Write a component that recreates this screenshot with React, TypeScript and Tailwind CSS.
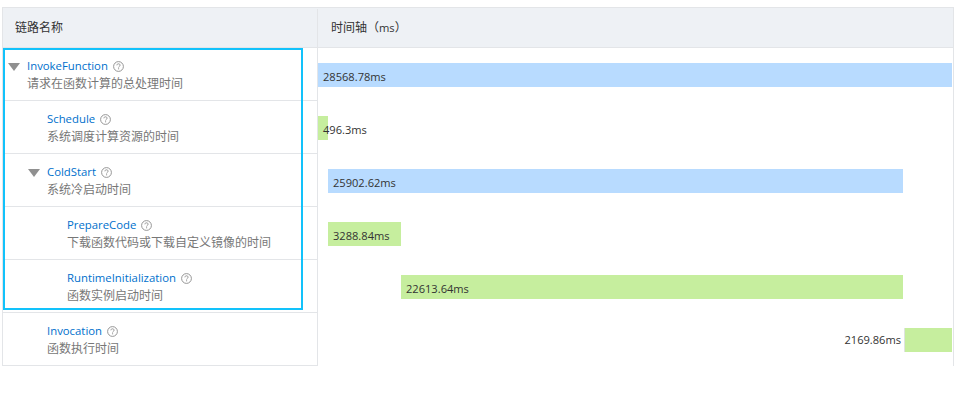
const FONT = "font-['Open_Sans','Noto_Sans_CJK_SC',sans-serif]";

type Row = {
  name: string;
  desc: string;
  indent: string;
  open?: boolean;
};

const rows: Row[] = [
  { name: "InvokeFunction", desc: "请求在函数计算的总处理时间", indent: "pl-[24px]", open: true },
  { name: "Schedule", desc: "系统调度计算资源的时间", indent: "pl-[44px]" },
  { name: "ColdStart", desc: "系统冷启动时间", indent: "pl-[44px]", open: true },
  { name: "PrepareCode", desc: "下载函数代码或下载自定义镜像的时间", indent: "pl-[64px]" },
  { name: "RuntimeInitialization", desc: "函数实例启动时间", indent: "pl-[64px]" },
  { name: "Invocation", desc: "函数执行时间", indent: "pl-[44px]" },
];

const HelpIcon = () => (
  <svg width="11" height="11" viewBox="0 0 11 11" fill="none" className="ml-[5px] shrink-0">
    <circle cx="5.5" cy="5.5" r="4.9" stroke="#8a8a8a" strokeWidth="0.9" />
    <path d="M3.9 4.3c0-.9.7-1.5 1.6-1.5s1.6.6 1.6 1.4c0 1.1-1.5 1.2-1.5 2.3" stroke="#8a8a8a" strokeWidth="0.9" />
    <rect x="5.1" y="7.3" width="1" height="1" fill="#8a8a8a" />
  </svg>
);

const Caret = ({ className }: { className: string }) => (
  <svg width="12" height="8" viewBox="0 0 12 8" className={className}>
    <path d="M0 0h12L6 8z" fill="#909090" />
  </svg>
);

const NameCell = ({ row }: { row: Row }) => (
  <div className={`relative h-[53px] border-b border-[#e3e5e8] pt-[9px] ${row.indent}`}>
    {row.open && (
      <Caret className={row.indent === "pl-[24px]" ? "absolute left-[5px] top-[15px]" : "absolute left-[25px] top-[15px]"} />
    )}
    <div className="flex h-[18px] items-center text-[11.35px] leading-[18px] text-[#0070cc]">
      <span>{row.name}</span>
      <HelpIcon />
    </div>
    <div className="text-[12px] leading-[18px] text-[#777777]">{row.desc}</div>
  </div>
);

const BarRow = ({ children }: { children: React.ReactNode }) => (
  <div className="flex h-[53px] items-start pt-[15px]">{children}</div>
);

const Label = ({ children }: { children: React.ReactNode }) => (
  <span className="whitespace-nowrap pl-[5px] text-[11.1px] leading-6 text-[#333333]">{children}</span>
);

export default function App() {
  return (
    <div className={`h-[416px] w-[959px] overflow-hidden bg-white ${FONT}`}>
      <div className="relative ml-[2px] mt-[7px] w-[952px] border-x border-[#e3e5e8]">
        <div className="flex h-[41px] border-y border-[#e3e5e8] bg-[#eef1f5] pt-px text-[12px] text-[#333333]">
          <div className="flex w-[315px] items-center border-r border-[#e3e5e8] pl-3">链路名称</div>
          <div className="flex items-center pl-[13px]">
            时间轴（<span className="text-[11.2px]">ms</span>）
          </div>
        </div>
        <div className="flex">
          <div className="w-[315px] border-r border-[#e3e5e8]">
            {rows.map((row) => (
              <NameCell key={row.name} row={row} />
            ))}
          </div>
          <div className="flex-1">
            <BarRow>
              <div className="h-6 w-[634px] bg-[#b8dbff]">
                <Label>28568.78ms</Label>
              </div>
            </BarRow>
            <BarRow>
              <div className="h-6 w-[10px] bg-[#c6ee9e]">
                <Label>496.3ms</Label>
              </div>
            </BarRow>
            <BarRow>
              <div className="ml-[10px] h-6 w-[575px] bg-[#b8dbff]">
                <Label>25902.62ms</Label>
              </div>
            </BarRow>
            <BarRow>
              <div className="ml-[10px] h-6 w-[73px] bg-[#c6ee9e]">
                <Label>3288.84ms</Label>
              </div>
            </BarRow>
            <BarRow>
              <div className="ml-[83px] h-6 w-[502px] bg-[#c6ee9e]">
                <Label>22613.64ms</Label>
              </div>
            </BarRow>
            <BarRow>
              <div className="ml-auto mr-[1px] flex items-center">
                <span className="whitespace-nowrap pr-[3px] text-[11.1px] leading-6 text-[#333333]">2169.86ms</span>
                <div className="h-6 w-[48px] border-l border-[#dfe3e0] bg-[#c6ee9e]" />
              </div>
            </BarRow>
          </div>
        </div>
        <div className="absolute left-0 top-[41px] h-[262px] w-[300px] border-2 border-[#12c2fb]" />
      </div>
    </div>
  );
}
